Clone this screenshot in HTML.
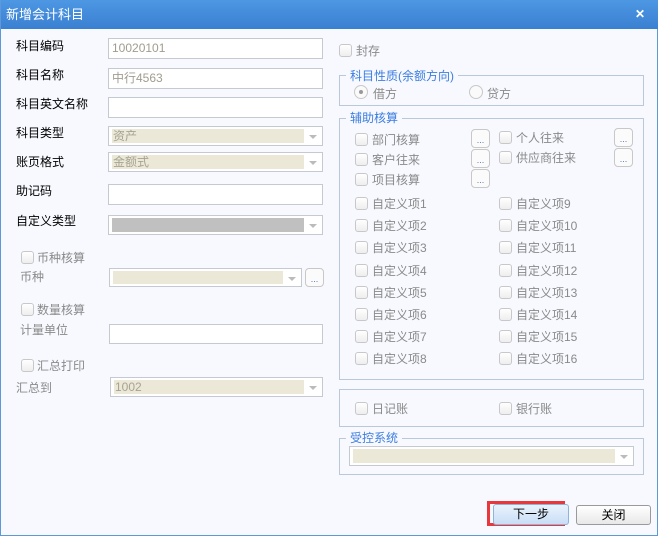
<!DOCTYPE html><html><head><meta charset="utf-8"><style>
*{margin:0;padding:0;box-sizing:border-box}
body{width:658px;height:536px;background:#fff;font-family:"Liberation Sans","Noto Sans CJK SC",sans-serif;font-size:12px;position:relative;overflow:hidden}
.win{position:absolute;left:0;top:0;width:658px;height:536px;background:#f7f9fe;border:1px solid #5f98d8;border-top:none}
.tb{position:absolute;left:0;top:0;width:658px;height:29px;background:linear-gradient(#4d97e3,#3a80d2);color:#fff;font-size:13px;line-height:29px;padding-left:5px}
.x{position:absolute;right:14px;top:0;color:#fff;font-weight:bold;font-size:12px}
.a{position:absolute;white-space:nowrap}
.lb{color:#000}
.g{color:#8a8a8a}
.inp{position:absolute;background:#fff;border:1px solid #c4c9d2;color:#a09c90;padding-left:3px;line-height:18px}
.sel{position:absolute;background:#fff;border:1px solid #c4c9d2}
.sel i{position:absolute;left:3px;top:2px;bottom:2px;right:18px;background:#ebe8d8;font-style:normal;color:#a7a393;line-height:15px;padding-left:1px}
.sel b{position:absolute;right:5px;top:8px;border:4px solid transparent;border-top:4px solid #bbb;border-bottom:none}
.cb{position:absolute;width:13px;height:13px;border:1px solid #c8c8c8;border-radius:3px;background:linear-gradient(#fff,#eee)}
.btn{position:absolute;width:19px;height:19px;border:1px solid #c8c8c8;border-radius:4px;background:#fbfbfb;color:#5577aa;font-size:9px;text-align:center;line-height:20px}
.fs{position:absolute;border:1px solid #b9c9da}
.lg{position:absolute;background:#f7f9fe;color:#3c7de0;padding:0 4px;font-size:12px;line-height:14px}
.rd{position:absolute;width:14px;height:14px;border:1px solid #c8c8c8;border-radius:50%;background:#fafafa}
</style></head><body><div class="win">
<div class="tb">新增会计科目<span class="x">✕</span></div>

<div class="a lb" style="left:15px;top:37px">科目编码</div>
<div class="inp" style="left:107px;top:38px;width:215px;height:21px">10020101</div>
<div class="a lb" style="left:15px;top:66px">科目名称</div>
<div class="inp" style="left:107px;top:68px;width:215px;height:21px">中行4563</div>
<div class="a lb" style="left:15px;top:95px">科目英文名称</div>
<div class="inp" style="left:107px;top:97px;width:215px;height:21px"></div>
<div class="a lb" style="left:15px;top:124px">科目类型</div>
<div class="sel" style="left:107px;top:126px;width:215px;height:20px"><i>资产</i><b></b></div>
<div class="a lb" style="left:15px;top:153px">账页格式</div>
<div class="sel" style="left:107px;top:152px;width:215px;height:20px"><i>金额式</i><b></b></div>
<div class="a lb" style="left:15px;top:182px">助记码</div>
<div class="inp" style="left:107px;top:184px;width:215px;height:21px"></div>
<div class="a lb" style="left:15px;top:212px">自定义类型</div>
<div class="sel" style="left:107px;top:215px;width:215px;height:20px"><i style="background:#c0c0c0"></i><b></b></div>

<div class="cb" style="left:20px;top:251px"></div><div class="a g" style="left:36px;top:249px">币种核算</div>
<div class="a g" style="left:19px;top:268px">币种</div>
<div class="sel" style="left:108px;top:268px;width:193px;height:19px"><i></i><b></b></div>
<div class="btn" style="left:304px;top:268px">...</div>
<div class="cb" style="left:20px;top:303px"></div><div class="a g" style="left:36px;top:301px">数量核算</div>
<div class="a g" style="left:19px;top:321px">计量单位</div>
<div class="inp" style="left:108px;top:324px;width:214px;height:20px"></div>
<div class="cb" style="left:20px;top:359px"></div><div class="a g" style="left:36px;top:357px">汇总打印</div>
<div class="a g" style="left:15px;top:379px">汇总到</div>
<div class="sel" style="left:109px;top:377px;width:213px;height:20px"><i>1002</i><b></b></div>

<div class="cb" style="left:338px;top:44px"></div><div class="a g" style="left:355px;top:42px">封存</div>
<div class="fs" style="left:338px;top:75px;width:305px;height:31px"></div>
<div class="lg" style="left:345px;top:69px">科目性质(余额方向)</div>
<div class="rd" style="left:353px;top:85px"><div style="position:absolute;left:4px;top:4px;width:4px;height:4px;border-radius:50%;background:#999"></div></div>
<div class="a g" style="left:372px;top:85px">借方</div>
<div class="rd" style="left:468px;top:85px"></div>
<div class="a g" style="left:486px;top:85px">贷方</div>

<div class="fs" style="left:338px;top:118px;width:305px;height:262px"></div>
<div class="lg" style="left:345px;top:111px">辅助核算</div>
<div class="cb" style="left:354px;top:133px"></div><div class="a g" style="left:371px;top:131px">部门核算</div><div class="btn" style="left:470px;top:129px">...</div>
<div class="cb" style="left:498px;top:131px"></div><div class="a g" style="left:515px;top:129px">个人往来</div><div class="btn" style="left:613px;top:128px">...</div>
<div class="cb" style="left:354px;top:153px"></div><div class="a g" style="left:371px;top:151px">客户往来</div><div class="btn" style="left:470px;top:149px">...</div>
<div class="cb" style="left:498px;top:151px"></div><div class="a g" style="left:515px;top:149px">供应商往来</div><div class="btn" style="left:613px;top:148px">...</div>
<div class="cb" style="left:354px;top:173px"></div><div class="a g" style="left:371px;top:171px">项目核算</div><div class="btn" style="left:470px;top:169px">...</div>

<div class="cb" style="left:354px;top:197px"></div><div class="a g" style="left:371px;top:195px">自定义项1</div>
<div class="cb" style="left:354px;top:219px"></div><div class="a g" style="left:371px;top:217px">自定义项2</div>
<div class="cb" style="left:354px;top:241px"></div><div class="a g" style="left:371px;top:239px">自定义项3</div>
<div class="cb" style="left:354px;top:264px"></div><div class="a g" style="left:371px;top:262px">自定义项4</div>
<div class="cb" style="left:354px;top:286px"></div><div class="a g" style="left:371px;top:284px">自定义项5</div>
<div class="cb" style="left:354px;top:308px"></div><div class="a g" style="left:371px;top:306px">自定义项6</div>
<div class="cb" style="left:354px;top:330px"></div><div class="a g" style="left:371px;top:328px">自定义项7</div>
<div class="cb" style="left:354px;top:352px"></div><div class="a g" style="left:371px;top:350px">自定义项8</div>
<div class="cb" style="left:498px;top:197px"></div><div class="a g" style="left:515px;top:195px">自定义项9</div>
<div class="cb" style="left:498px;top:219px"></div><div class="a g" style="left:515px;top:217px">自定义项10</div>
<div class="cb" style="left:498px;top:241px"></div><div class="a g" style="left:515px;top:239px">自定义项11</div>
<div class="cb" style="left:498px;top:264px"></div><div class="a g" style="left:515px;top:262px">自定义项12</div>
<div class="cb" style="left:498px;top:286px"></div><div class="a g" style="left:515px;top:284px">自定义项13</div>
<div class="cb" style="left:498px;top:308px"></div><div class="a g" style="left:515px;top:306px">自定义项14</div>
<div class="cb" style="left:498px;top:330px"></div><div class="a g" style="left:515px;top:328px">自定义项15</div>
<div class="cb" style="left:498px;top:352px"></div><div class="a g" style="left:515px;top:350px">自定义项16</div>

<div class="fs" style="left:338px;top:389px;width:305px;height:38px"></div>
<div class="cb" style="left:354px;top:402px"></div><div class="a g" style="left:371px;top:400px">日记账</div>
<div class="cb" style="left:498px;top:402px"></div><div class="a g" style="left:515px;top:400px">银行账</div>

<div class="fs" style="left:338px;top:438px;width:305px;height:37px"></div>
<div class="lg" style="left:345px;top:431px">受控系统</div>
<div class="sel" style="left:348px;top:446px;width:285px;height:20px"><i></i><b></b></div>

<div class="a" style="left:486px;top:501px;width:78px;height:25px;border:3px solid #e8383c"></div>
<div class="a" style="left:492px;top:504px;width:76px;height:21px;border:1px solid #8fb4dc;border-radius:3px;background:linear-gradient(#eaf3fd,#c8def6);text-align:center;line-height:19px;color:#000">下一步</div>
<div class="a" style="left:575px;top:505px;width:75px;height:20px;border:1px solid #9a9a9a;border-radius:3px;background:linear-gradient(#fff,#e8e8e8);text-align:center;line-height:18px;color:#000">关闭</div>
</div></body></html>
